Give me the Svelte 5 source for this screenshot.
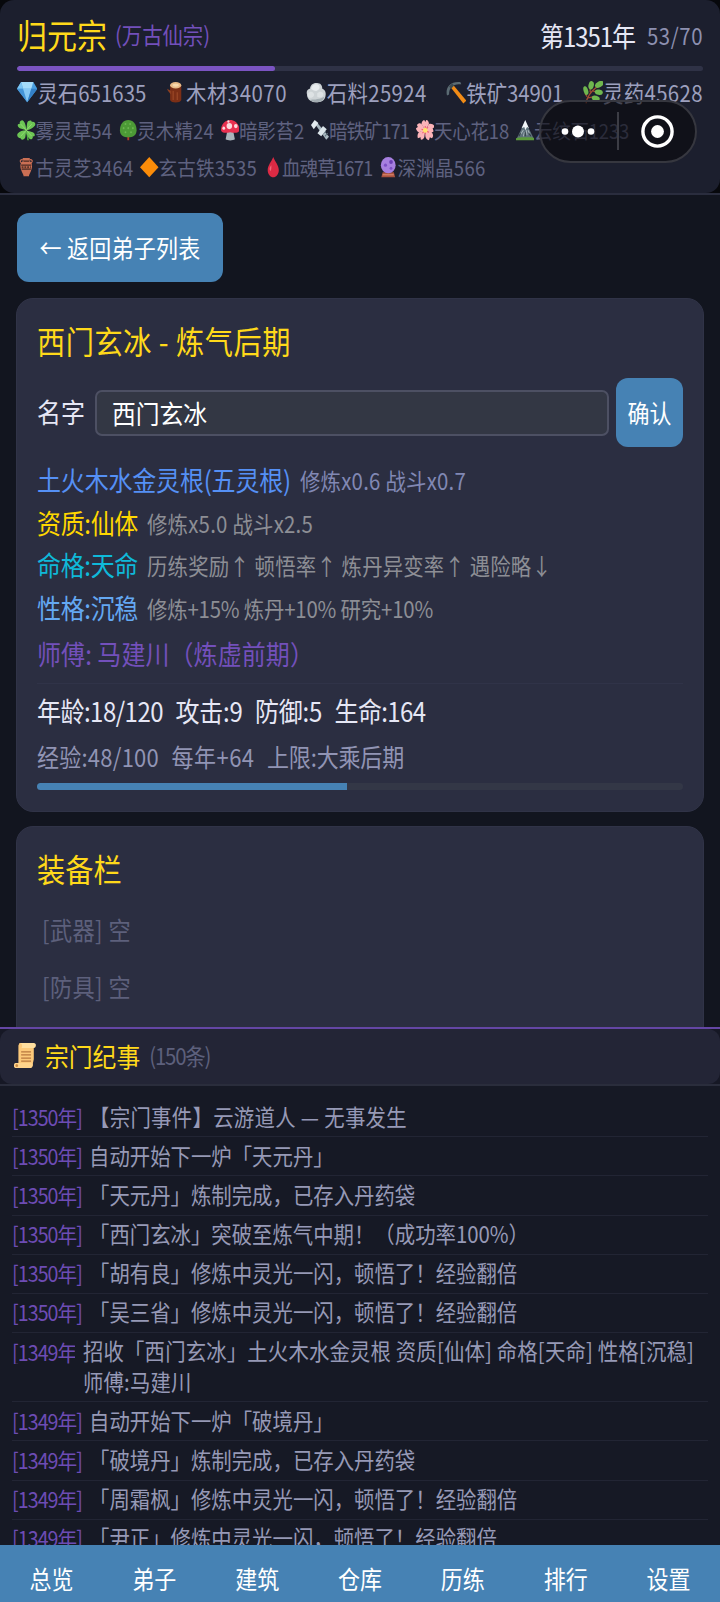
<script>
  const resources = [
    { icon: 'gem', text: '灵石651635', w: 109 },
    { icon: 'log', text: '木材34070', w: 101 },
    { icon: 'rock', text: '石料25924', w: 100 },
    { icon: 'pick', text: '铁矿34901', w: 97 },
    { icon: 'herb', text: '灵药45628', w: 100 },
  ];

  const materials = [
    [
      { icon: 'clover', text: '雾灵草54', w: 76.5 },
      { icon: 'tree', text: '灵木精24', w: 77 },
      { icon: 'mushroom', text: '暗影苔2', w: 65 },
      { icon: 'bolt', text: '暗铁矿171', w: 80 },
      { icon: 'blossom', text: '天心花18', w: 75 },
      { icon: 'mountain', text: '云纹石1233', w: 95 },
    ],
    [
      { icon: 'amphora', text: '古灵芝3464', w: 98 },
      { icon: 'diamond', text: '玄古铁3535', w: 98.5 },
      { icon: 'blood', text: '血魂草1671', w: 90.5 },
      { icon: 'crystal', text: '深渊晶566', w: 88 },
    ],
  ];

  const traits = [
    { name: '土火木水金灵根(五灵根)', w: 254, color: '#5590f5', note: '修炼x0.6 战斗x0.7', nw: 166, noteColor: '#8188b4' },
    { name: '资质:仙体', w: 101, color: '#ffd700', note: '修炼x5.0 战斗x2.5', nw: 166 },
    { name: '命格:天命', w: 101, color: '#0fb9d9', note: '历练奖励↑ 顿悟率↑ 炼丹异变率↑ 遇险略↓', nw: 405 },
    { name: '性格:沉稳', w: 101, color: '#64a8f2', note: '修炼+15% 炼丹+10% 研究+10%', nw: 286 },
  ];

  const logs = [
    { year: 1350, text: '【宗门事件】云游道人 — 无事发生', w: 318 },
    { year: 1350, text: '自动开始下一炉「天元丹」' },
    { year: 1350, text: '「天元丹」炼制完成，已存入丹药袋' },
    { year: 1350, text: '「西门玄冰」突破至炼气中期！（成功率100%）', w: 440 },
    { year: 1350, text: '「胡有良」修炼中灵光一闪，顿悟了！经验翻倍' },
    { year: 1350, text: '「吴三省」修炼中灵光一闪，顿悟了！经验翻倍' },
    { year: 1349, text: '招收「西门玄冰」土火木水金灵根 资质[仙体] 命格[天命] 性格[沉稳] 师傅:马建川', long: true },
    { year: 1349, text: '自动开始下一炉「破境丹」' },
    { year: 1349, text: '「破境丹」炼制完成，已存入丹药袋' },
    { year: 1349, text: '「周霜枫」修炼中灵光一闪，顿悟了！经验翻倍' },
    { year: 1349, text: '「尹正」修炼中灵光一闪，顿悟了！经验翻倍' },
  ];

  const tabs = ['总览', '弟子', '建筑', '仓库', '历练', '排行', '设置'];

  let name = $state('西门玄冰');

  // Spread the letters so the text takes the given width
  function fit(node, width) {
    if (!width) return;
    const extra = width - node.getBoundingClientRect().width;
    node.style.letterSpacing = `${extra / node.textContent.length}px`;
  }
</script>

{#snippet icon(kind)}
  <svg class="icon" viewBox="0 0 20 20" preserveAspectRatio="none">
    {#if kind === 'gem'}
      <path d="M4 1h12l4 6-10 12L0 7z" fill="#4a9fe0" />
      <path d="M4 1h12l-2 6H6z" fill="#a5dcfa" />
      <path d="M4 1l2 6H0z" fill="#7cc4f2" />
      <path d="M0 7h6l4 12z" fill="#4494d8" />
      <path d="M6 7h8l-4 12z" fill="#86c8f5" />
      <path d="M14 7h6L10 19z" fill="#3380c8" />
    {:else if kind === 'log'}
      <path d="M4 4v13c1 3 10 3 11 0V4z" fill="#7c2f16" />
      <path d="M1 7l4 2v3L2 9z" fill="#8e3f20" />
      <path d="M7 9v8M11 10v7" stroke="#a04c2a" stroke-width="1" />
      <ellipse cx="9.5" cy="3.8" rx="5.5" ry="2.8" fill="#e9bb88" />
      <ellipse cx="9.5" cy="3.8" rx="3" ry="1.3" fill="#f8d9ad" />
    {:else if kind === 'rock'}
      <path d="M1 12c-1-3 1-5 3-5 0-4 4-6 8-5 3 0 4 3 4 5 3 1 4 4 3 7-1 4-5 5-9 5S1 17 1 12z" fill="#cdd3d6" />
      <path d="M5 7c1-4 5-5 8-3 1 2 0 4-3 5-2 0-4-1-5-2z" fill="#e8ecee" />
      <path d="M2 11c2-2 5-2 6 1 0 2-2 3-4 3s-3-2-2-4zM11 11c2-2 6-2 6 1s-4 3-6 2z" fill="#dde2e4" />
      <path d="M4 17c3-1 5 0 7-1 3 0 5-1 7-2-1 4-5 5-8 5-2 0-5-1-6-2z" fill="#a3adb2" />
    {:else if kind === 'pick'}
      <path d="M4 5l2.500-2L20 17.500 17 20z" fill="#f18b16" />
      <path d="M1 13C-1 6 4 0 14 1l1 2C8 2 3 5 3 12z" fill="#5b6b73" />
      <path d="M3 5l3-3 2 2-3 3z" fill="#3d4a50" />
    {:else if kind === 'herb'}
      <path d="M3 20C4 13 8 9 14 5M4 14L2 11M7 10V6M5 15l6-1M10 9l4 1" fill="none" stroke="#a34b33" stroke-width="1.2" />
      <g fill="#6fb64e">
        <ellipse cx="16" cy="3" rx="4.5" ry="2.6" transform="rotate(-25 16 3)" />
        <ellipse cx="8" cy="3.8" rx="2.6" ry="3.8" transform="rotate(15 8 3.8)" />
        <ellipse cx="2.8" cy="8.5" rx="2.2" ry="4" transform="rotate(-20 2.8 8.5)" />
        <ellipse cx="15.5" cy="10" rx="4" ry="2.4" transform="rotate(10 15.5 10)" />
        <ellipse cx="12.5" cy="15.5" rx="4" ry="2.4" transform="rotate(15 12.5 15.5)" />
      </g>
    {:else if kind === 'clover'}
      <path d="M10 10c1 4 2 6 3 10h-2c0-4-1-7-2-9z" fill="#4ba53c" />
      <g fill="#6cc555">
        <path d="M10 10L3 8C0 7 0 3 3 4 2 1 6-1 7 1c2 2 3 6 3 9z" />
        <path d="M10 10l1-7c1-3 5-3 5-1 3-1 5 2 3 4-2 2-5 4-9 4z" />
        <path d="M10 10l7 2c3 1 3 5 0 4 1 3-3 4-4 2-2-2-3-5-3-8z" />
        <path d="M10 10l-1 7c-1 3-5 3-5 1-3 0-5-3-3-5s5-3 9-3z" />
      </g>
      <path d="M4 4l12 12M16 4L4 16" stroke="#9fe07c" stroke-width=".7" />
    {:else if kind === 'tree'}
      <path d="M8 14h4l-1 3v3H9v-3z" fill="#b0392a" />
      <path d="M10 0c5 0 9 4 9 10 0 5-4 7-9 7s-9-2-9-7C1 4 5 0 10 0z" fill="#4c9a36" />
      <g fill="#6bb650">
        <circle cx="7" cy="4" r="1" />
        <circle cx="12" cy="4" r="1" />
        <circle cx="5" cy="8" r="1" />
        <circle cx="10" cy="8" r="1" />
        <circle cx="15" cy="8" r="1" />
        <circle cx="7" cy="12" r="1" />
        <circle cx="13" cy="12" r="1" />
      </g>
    {:else if kind === 'mushroom'}
      <path d="M7 10h6l2 9c-2 1.500-8 1.500-10 0z" fill="#a9b5bb" />
      <path d="M0 10C0 4 5 0 10 0s10 4 10 10c-1 3-5 3-10 2-5 1-9 1-10-2z" fill="#e8304f" />
      <circle cx="9" cy="6" r="3" fill="#fbd9dd" />
      <circle cx="16" cy="6" r="2" fill="#fbd9dd" />
      <circle cx="3" cy="8" r="1.5" fill="#fbd9dd" />
      <circle cx="8" cy="1.5" r="1.2" fill="#fbd9dd" />
    {:else if kind === 'bolt'}
      <path d="M5 5l2-2 12.500 13.500-3 3z" fill="#a9b8c0" />
      <path d="M13 14l3-3M15 16l3-3" stroke="#61737d" />
      <path d="M0 5l4-5 4 3-5 6z" fill="#e3ebef" />
      <path d="M7 13l6-7 4 3-6 7z" fill="#dbe4e9" />
    {:else if kind === 'blossom'}
      <g fill="#fbb3b8">
        <path d="M10 10L6 4c0-3 2-4 3-4l1 2 1-2c2 0 3 2 3 4z" />
        <path d="M10 10l4-6c3-1 6 1 6 3l-2 1 1 3c-2 2-4 1-6 1z" />
        <path d="M10 10l7 2c2 2 2 5 0 6l-2-1-1 3c-3-1-4-3-4-5z" />
        <path d="M10 10l-1 7c-1 2-3 3-4 2v-2l-3 1c-1-3 0-6 3-7z" />
        <path d="M10 10l-7 2c-2-1-3-3-3-4l2-1-1-2c2-3 5-2 6 0z" />
      </g>
      <path d="M10 6v8M6 9l8 3M7 13l6-6" stroke="#f0566e" stroke-width="1.1" />
      <circle cx="10" cy="10" r="2.5" fill="#ffe36a" />
    {:else if kind === 'mountain'}
      <path d="M1 18L10 1l9 17z" fill="#5d707a" />
      <path d="M10 0L6 8l3-1 1 3 2-3 2 1z" fill="#f2f6f8" />
      <path d="M5 14l3-4M8 16l1-4M12 15l-1-5M15 14l-2-4" stroke="#aab7bd" />
      <path d="M3 16l2-3M10 16v-4M16 16l-2-3" stroke="#2d3a41" />
      <path d="M0 20v-2c3-1 5-1 8-1h5c3 0 5 0 7 1v2z" fill="#5c9a3c" />
    {:else if kind === 'amphora'}
      <path d="M6 1h8l-1 3c4 1 4 6 2 10l-2 4v1H7v-1l-2-4C3 10 3 5 7 4z" fill="#cb6f54" />
      <path d="M5 6C2 4 4 2 7 3M15 6c3-2 1-4-2-3" stroke="#cb6f54" stroke-width="1.2" fill="none" />
      <path d="M7 4h6M4.500 8h11M5 12h10" stroke="#4a2a22" stroke-width="1.2" />
      <path d="M5 10h10" stroke="#5d3529" stroke-width="2" stroke-dasharray="2 1" />
    {:else if kind === 'diamond'}
      <path d="M10 0l10 10-10 10L0 10z" fill="#fb8c09" />
    {:else if kind === 'blood'}
      <path d="M10 0c2 5 6 8 6 13 0 4-3 7-6 7s-6-3-6-7c0-5 4-8 6-13z" fill="#dc2a44" />
      <path d="M6 12c0-2 1-3 2-4 0 3 0 4-1 6z" fill="#f0697a" />
    {:else if kind === 'crystal'}
      <path d="M4 15h12l1.500 5h-15z" fill="#a9523f" />
      <path d="M4 17.500h12" stroke="#df8d72" />
      <circle cx="10" cy="8" r="8" fill="#a67fe0" />
      <circle cx="13" cy="5" r="2" fill="#6b3fb5" />
      <circle cx="7" cy="8" r="1.7" fill="#7c50c5" />
      <circle cx="13" cy="11" r="1.5" fill="#7c50c5" />
    {:else if kind === 'scroll'}
      <path d="M5 0h13v13l-1 4c0 2-1 3-3 3H2l2-4V2z" fill="#fcc97a" />
      <path d="M5 0h13c3 0 2 4 0 4H6c2 0 2-4-1-4z" fill="#ffdf9f" />
      <path d="M2 16h14c2 0 1 4-1 4H2c-3 0-3-4 0-4z" fill="#ffd48c" />
      <circle cx="2.5" cy="18" r="1.2" fill="#c98a45" />
      <path d="M6.500 7h9M6.500 9.500h9M6.500 12h9M6.500 14.500h9" stroke="#b8783f" />
    {/if}
  </svg>
{/snippet}

<div class="app">
  <header>
    <div class="panel">
      <div class="top">
        <span class="t sect" use:fit={90}>归元宗</span>
        <span class="t rank" use:fit={95}>(万古仙宗)</span>
        <span class="t year" use:fit={95}>第1351年</span>
        <span class="t count" use:fit={56}>53/70</span>
      </div>
      <div class="progress"><div class="fill" style="width: 37.6%"></div></div>
      <div class="resources">
        {#each resources as r}
          <span class="item">{@render icon(r.icon)}<span class="t" use:fit={r.w}>{r.text}</span></span>
        {/each}
      </div>
      {#each materials as row}
        <div class="materials">
          {#each row as r}
            <span class="item">{@render icon(r.icon)}<span class="t" use:fit={r.w}>{r.text}</span></span>
          {/each}
        </div>
      {/each}
    </div>
    <div class="capsule">
      <svg width="154" height="59" viewBox="0 0 154 59">
        <circle cx="24" cy="29.5" r="3.3" fill="#fff" />
        <circle cx="37" cy="29.5" r="6" fill="#fff" />
        <circle cx="50" cy="29.5" r="3.3" fill="#fff" />
        <path d="M77 10v38" stroke="#3c3d45" stroke-width="2" />
        <circle cx="116.5" cy="29.5" r="14.6" fill="none" stroke="#fff" stroke-width="3.4" />
        <circle cx="116.5" cy="29.5" r="6.4" fill="#fff" />
      </svg>
    </div>
  </header>

  <main>
    <button class="back"><span class="t" use:fit={161}>← 返回弟子列表</span></button>

    <section class="card">
      <h2><span class="t" use:fit={254}>西门玄冰 - 炼气后期</span></h2>
      <div class="rename">
        <label for="name"><span class="t">名字</span></label>
        <div class="field"><input id="name" class="t" bind:value={name} /></div>
        <button class="confirm"><span class="t">确认</span></button>
      </div>
      {#each traits as tr}
        <div class="trait">
          <span class="t" style="color: {tr.color}" use:fit={tr.w}>{tr.name}</span>
          <span class="t note" style="color: {tr.noteColor ?? '#8d8e95'}" use:fit={tr.nw}>{tr.note}</span>
        </div>
      {/each}
      <div class="master"><span class="t" use:fit={277}>师傅: 马建川（炼虚前期）</span></div>
      <div class="stats">
        <span class="t" use:fit={126}>年龄:18/120</span>
        <span class="t" use:fit={67}>攻击:9</span>
        <span class="t" use:fit={67}>防御:5</span>
        <span class="t" use:fit={91}>生命:164</span>
      </div>
      <div class="stats exp">
        <span class="t" use:fit={122}>经验:48/100</span>
        <span class="t" use:fit={83}>每年+64</span>
        <span class="t" use:fit={137}>上限:大乘后期</span>
      </div>
      <div class="bar"><div class="fill" style="width: 48%"></div></div>
    </section>

    <section class="card">
      <h2><span class="t">装备栏</span></h2>
      <div class="slot"><span class="t" use:fit={89}>[武器] 空</span></div>
      <div class="slot"><span class="t" use:fit={89}>[防具] 空</span></div>
    </section>
  </main>

  <section class="chronicle">
    <div class="head">
      <div class="title">
        {@render icon('scroll')}
        <span class="t heading">宗门纪事</span>
        <span class="t total" use:fit={61}>(150条)</span>
      </div>
    </div>
    <div class="list">
      {#each logs as log}
        <div class="entry" class:long={log.long}>
          <span class="tag"><span class="t" use:fit={70}>[{log.year}年]</span></span>
          <span class="t msg" use:fit={log.w}>{log.text}</span>
        </div>
      {/each}
    </div>
  </section>

  <nav>
    {#each tabs as tab}
      <button><span class="t">{tab}</span></button>
    {/each}
  </nav>
</div>

<style>
  :global(body) {
    background: #000;
  }

  .app {
    width: 720px;
    height: 1602px;
    display: flex;
    flex-direction: column;
    overflow: hidden;
    background: #12151f;
    color: #e6e7f5;
    font-family: "Noto Sans CJK SC", sans-serif;
    font-size: 24px;
    line-height: 1;
  }

  .t {
    display: inline-block;
    white-space: pre;
    transform: scaleY(1.12);
  }

  button {
    border: none;
    padding: 0 0 2px;
    background: #4682b4;
    color: #fff;
    font-family: inherit;
    font-size: 22px;
    line-height: 1;
  }

  header {
    position: relative;
    box-sizing: border-box;
    height: 195px;
    flex: none;
    background: #07080c;
    border-bottom: 2px solid #2a2d3e;
  }

  .panel {
    box-sizing: border-box;
    height: 193px;
    padding: 12px 17px 0;
    background: #1c1f2e;
    border-radius: 14px;
  }

  .top {
    display: flex;
    align-items: center;
    height: 44px;
  }

  .sect {
    font-size: 30px;
    color: #ffd91a;
  }

  .rank {
    margin-left: 8px;
    font-size: 20.4px;
    color: #7350bb;
  }

  .year {
    margin-left: auto;
    padding-top: 3px;
    font-size: 24px;
  }

  .count {
    margin-left: 12px;
    padding-top: 3px;
    font-size: 20.4px;
    color: #8d90b0;
  }

  .progress {
    height: 5px;
    margin-top: 10px;
    border-radius: 3px;
    background: #2f3246;
    overflow: hidden;
  }

  .progress .fill {
    height: 100%;
    border-radius: 3px;
    background: #7b54c2;
  }

  .resources {
    display: flex;
    justify-content: space-between;
    align-items: center;
    height: 41px;
    padding-top: 1px;
    margin-bottom: -1px;
    font-size: 20.4px;
    color: #9da0be;
  }

  .materials {
    display: flex;
    align-items: center;
    gap: 6.5px;
    height: 37px;
    font-size: 18.5px;
    color: #5f6280;
  }

  .item {
    display: flex;
    align-items: center;
  }

  .icon {
    flex: none;
    width: 1em;
    height: 1.1em;
  }

  .capsule {
    position: absolute;
    left: 539px;
    top: 100px;
    width: 154px;
    height: 59px;
    border: 2px solid #36373f;
    border-radius: 32px;
    background: rgba(8, 9, 12, 0.6);
  }

  .capsule svg {
    display: block;
  }

  main {
    height: 832px;
    flex: none;
    box-sizing: border-box;
    padding: 18px 16px 0;
    overflow: hidden;
  }

  .back {
    display: block;
    width: 206px;
    height: 69px;
    margin-left: 1px;
    border-radius: 12px;
  }

  .card {
    box-sizing: border-box;
    height: 514px;
    margin-top: 16px;
    padding: 18px 20px 0;
    border: 1px solid #303347;
    border-radius: 17px;
    background: #2b2e41;
  }

  .card + .card {
    margin-top: 14px;
  }

  h2 {
    margin: 0;
    height: 48px;
    display: flex;
    align-items: center;
    font-size: 28.2px;
    font-weight: normal;
    color: #ffd91a;
  }

  .rename {
    display: flex;
    align-items: center;
    height: 69px;
    margin-top: 13px;
  }

  .rename label {
    width: 58px;
    padding-bottom: 1px;
  }

  .field {
    box-sizing: border-box;
    width: 515px;
    height: 46px;
    padding: 0 15px 2px;
    border: 2px solid #4d5063;
    border-radius: 7px;
    background: #333744;
    display: flex;
    align-items: center;
  }

  .field input {
    width: 100%;
    height: 34px;
    padding: 0;
    border: none;
    outline: none;
    background: none;
    color: #fff;
    font-family: inherit;
    font-size: 23.8px;
  }

  .confirm {
    width: 67px;
    height: 69px;
    margin-left: 7px;
    border-radius: 12px;
  }

  .trait {
    display: flex;
    align-items: center;
    gap: 9px;
    height: 42.5px;
  }

  .rename + .trait {
    margin-top: 12px;
  }

  .note {
    font-size: 20.4px;
  }

  .master {
    display: flex;
    align-items: center;
    box-sizing: border-box;
    height: 55px;
    padding-bottom: 5px;
    border-bottom: 1px solid #303348;
    color: #7350bb;
  }

  .stats {
    display: flex;
    align-items: center;
    gap: 12.5px;
    height: 54px;
  }

  .exp {
    height: 36px;
    font-size: 22px;
    color: #9194b4;
  }

  .bar {
    height: 7px;
    margin-top: 9px;
    border-radius: 4px;
    background: #333746;
    overflow: hidden;
  }

  .bar .fill {
    height: 100%;
    background: #4682b4;
  }

  .slot {
    display: flex;
    align-items: center;
    height: 57px;
    padding-left: 5px;
    font-size: 22.2px;
    color: #5d607c;
  }

  h2 + .slot {
    margin-top: 8px;
  }

  .chronicle {
    box-sizing: border-box;
    height: 518px;
    flex: none;
    overflow: hidden;
    border-top: 2px solid #6446a4;
    background: #161925;
  }

  .head {
    background: #161825;
    border-bottom: 2px solid #2a2d3c;
  }

  .title {
    box-sizing: border-box;
    display: flex;
    align-items: center;
    height: 55px;
    padding: 0 0 2px 14px;
    border-radius: 12px;
    background: #232536;
  }

  .heading {
    margin-left: 9px;
    font-size: 23.8px;
    color: #ffd91a;
  }

  .total {
    margin-left: 9px;
    font-size: 20.4px;
    color: #5d607c;
  }

  .title .icon {
    width: 22px;
    height: 25px;
  }

  .list {
    padding: 12px 12px 0;
  }

  .entry {
    box-sizing: border-box;
    display: flex;
    height: 39.2px;
    padding-top: 8.5px;
    border-bottom: 1px solid #222534;
    font-size: 20.4px;
    color: #9699b6;
  }

  .tag {
    flex: none;
    width: 77px;
    font-size: 19.6px;
    color: #6d4cb4;
  }

  .msg {
    flex: none;
  }

  .long {
    height: 69px;
    padding-top: 6px;
  }

  .long .tag {
    box-sizing: border-box;
    width: 63px;
    height: 26px;
    margin-top: -1px;
    margin-right: 8px;
    padding-top: 4px;
    overflow: hidden;
  }

  .long .msg {
    width: 618px;
    white-space: normal;
    line-height: 27.5px;
    letter-spacing: 0.15px;
  }

  nav {
    flex: 1;
    display: flex;
    background: #4682b4;
  }

  nav button {
    flex: 1;
    padding-top: 11px;
  }
</style>
